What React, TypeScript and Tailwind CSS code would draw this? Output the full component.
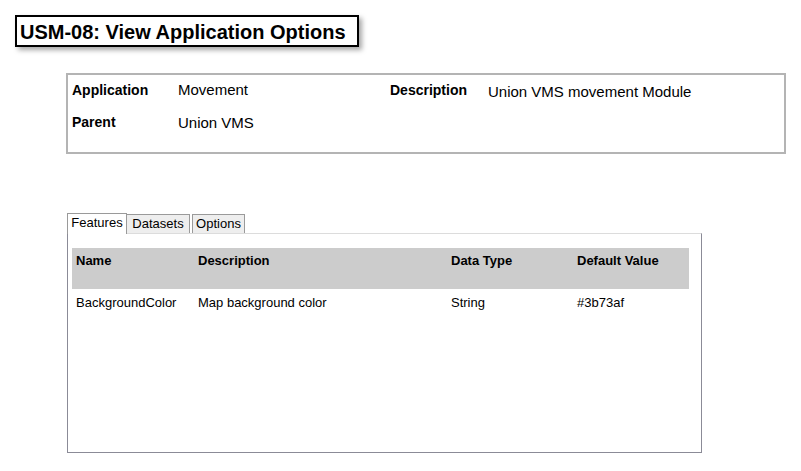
import React from 'react';

const features = [
  { name: 'BackgroundColor', description: 'Map background color', type: 'String', value: '#3b73af' },
];

const tabs = ['Features', 'Datasets', 'Options'];

export default function App() {
  return (
    <div className="min-h-[471px] w-[801px] bg-white text-black font-['Liberation_Sans',Arial,sans-serif]">
      {/* Page title */}
      <div className="pl-[15px] pt-[15px]">
        <div className="inline-flex h-[32px] w-[344px] items-center border-2 border-black pl-[3px] pt-[1px] shadow-[3px_3px_5px_rgba(0,0,0,0.35)]">
          <h1 className="text-[20px] font-bold leading-none">USM-08: View Application Options</h1>
        </div>
      </div>

      {/* Application details */}
      <div className="ml-[66px] mt-[26px] h-[81px] w-[720px] border-2 border-[#b4b4b4] pl-[4px] pt-[6px]">
        <div className="grid grid-cols-[106px_212px_98px_1fr] gap-y-[12px] leading-[18px]">
          <span className="text-[14px] font-bold">Application</span>
          <span className="text-[15px]">Movement</span>
          <span className="text-[14px] font-bold">Description</span>
          <span className="pt-[2px] text-[15px]">Union VMS movement Module</span>
          <span className="text-[14px] font-bold">Parent</span>
          <span className="pt-[1px] text-[15px]">Union VMS</span>
        </div>
      </div>

      {/* Tabs */}
      <div className="ml-[67px] mt-[59px] w-[635px]">
        <div className="flex items-end text-[13px] leading-none">
          {tabs.map((t, i) => (
            <div
              key={t}
              className={
                i === 0
                  ? 'relative -mb-px flex h-[21px] w-[60px] items-center justify-center border border-b-0 border-[#9a9a9a] bg-white pb-[3px]'
                  : i === 1
                    ? 'flex h-[19px] w-[63px] items-center justify-center border border-b-0 border-l-0 border-[#9a9a9a] bg-[#eeeeee] pb-[1px]'
                    : 'ml-[2px] flex h-[19px] w-[53px] items-center justify-center border border-b-0 border-[#9a9a9a] bg-[#eeeeee] pb-[1px]'
              }
            >
              {t}
            </div>
          ))}
        </div>
        <div className="h-[220px] border border-t-[#dcdcdc] border-x-[#8b8b97] border-b-[#8b8b97] pl-[4px] pr-[12px] pt-[14px]">
          <div className="text-[13px]">
            <div className="grid h-[41px] grid-cols-[122px_253px_126px_1fr] bg-[#cccccc] pl-[4px] pt-[3px] font-bold">
              <span>Name</span>
              <span>Description</span>
              <span>Data Type</span>
              <span>Default Value</span>
            </div>
            {features.map((f) => (
              <div key={f.name} className="grid grid-cols-[122px_253px_126px_1fr] pl-[4px] pt-[4px]">
                <span>{f.name}</span>
                <span>{f.description}</span>
                <span>{f.type}</span>
                <span>{f.value}</span>
              </div>
            ))}
          </div>
        </div>
      </div>
    </div>
  );
}
